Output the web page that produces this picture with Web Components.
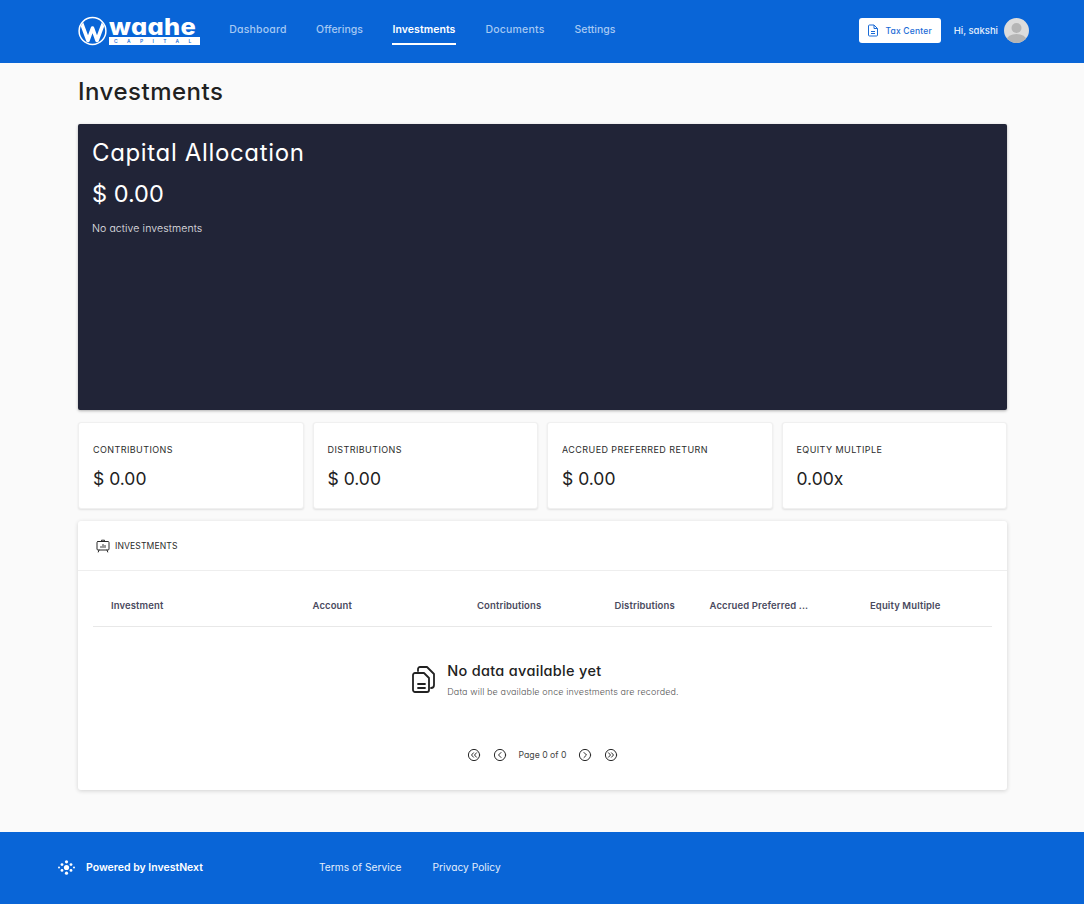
<!DOCTYPE html>
<html>
<head>
<meta charset="utf-8">
<title>Investments</title>
<style>
  html, body { margin: 0; padding: 0; background: #fafafa; }
  body { font-family: Inter, "Open Sans", sans-serif; color: #212121; }
  main { display: block; padding: 0 77px 0 78px; height: 769px; box-sizing: border-box; }
  .stats { display: grid; grid-template-columns: repeat(4, 1fr); gap: 9px; margin-top: 12px; }
</style>
</head>
<body>
<app-header></app-header>
<main>
  <page-title>Investments</page-title>
  <allocation-card></allocation-card>
  <div class="stats">
    <stat-card label="CONTRIBUTIONS" value="$ 0.00"></stat-card>
    <stat-card label="DISTRIBUTIONS" value="$ 0.00"></stat-card>
    <stat-card label="ACCRUED PREFERRED RETURN" value="$ 0.00"></stat-card>
    <stat-card label="EQUITY MULTIPLE" value="0.00x"></stat-card>
  </div>
  <investments-table></investments-table>
</main>
<app-footer></app-footer>

<script>
// single-storey "a" in Inter, closest thing to the reference's typeface
const ROUND_A = `* { font-feature-settings: "cv11" !important; }`;

class AppHeader extends HTMLElement {
  constructor() {
    super();
    this.shadowDOM = this.attachShadow({mode: "open"});
    this.shadowDOM.innerHTML = `
      <style>
        ${ROUND_A}
        :host { display: flex; align-items: center; height: 63px; background: #0965d7; padding: 0 55px 0 78px; box-sizing: border-box; color: #fff; }
        .logo { display: flex; align-items: center; gap: 2px; width: 122px; height: 30px; margin-top: -2px; }
        .word { display: flex; flex-direction: column; width: 91px; }
        .waahe { font: 800 22.5px/17px Inter, sans-serif; height: 17px; margin-top: 1px; letter-spacing: .3px; transform: scaleX(1.13); transform-origin: left center; white-space: nowrap; }
        .capital { background: #fff; color: #0965d7; font: 500 5px/8px Inter, sans-serif; letter-spacing: 9.4px; height: 8px; padding-left: 5px; margin-top: 2px; white-space: nowrap; }
        nav { display: flex; margin-left: 29px; gap: 29px; height: 63px; }
        nav a { display: flex; align-items: center; justify-content: center; white-space: nowrap; font: 500 10.5px Inter, sans-serif; letter-spacing: .2px; color: #a5c8f3; height: 59px; }
        nav a.on { color: #fff; font-weight: 600; letter-spacing: .05px; border-bottom: 2px solid #fff; padding-top: 15px; height: 28px; }
        .right { margin-left: auto; display: flex; align-items: center; padding-bottom: 2px; }
        .tax { display: flex; align-items: center; justify-content: center; gap: 4px; width: 82px; height: 25px; margin-left: 1px; background: #fff; border-radius: 3px; color: #1a6bd6; font: 500 8.5px Inter, sans-serif; letter-spacing: .2px; }
        .hi { font: 500 9.5px Inter, sans-serif; margin-left: 13px; margin-right: 6px; color: #e3eefc; }
      </style>
      <div class="logo">
        <svg width="29" height="30" viewBox="0 0 29 30">
          <defs><clipPath id="ring"><circle cx="14.5" cy="15" r="12.6"/></clipPath></defs>
          <circle cx="14.5" cy="15" r="13.4" fill="none" stroke="#fff" stroke-width="1.5"/>
          <path clip-path="url(#ring)" d="M3.5 7 L10 24.5 L14.5 12 L19 24.5 L25.5 7" fill="none" stroke="#fff" stroke-width="3.6" stroke-linejoin="round"/>
        </svg>
        <div class="word"><div class="waahe">waahe</div><div class="capital">CAPITAL</div></div>
      </div>
      <nav>
        <a style="width:58px">Dashboard</a><a style="width:47px;letter-spacing:0">Offerings</a><a class="on" style="width:64px">Investments</a><a style="width:60px">Documents</a><a style="width:42px;letter-spacing:0">Settings</a>
      </nav>
      <div class="right">
        <div class="tax">
          <svg width="12" height="13" viewBox="0 0 12 13" fill="none" stroke="#1a6bd6" stroke-width="1">
            <path d="M1.5 2a1 1 0 0 1 1-1h4.5l3.5 3.5V11a1 1 0 0 1-1 1h-7a1 1 0 0 1-1-1z"/>
            <path d="M7 1v3.5h3.5M4 7.5h4M4 9.5h4"/>
          </svg>
          <span style="margin-left:2px">Tax Center</span>
        </div>
        <div class="hi">Hi, sakshi</div>
        <svg width="25" height="25" viewBox="0 0 25 25">
          <defs><clipPath id="av"><circle cx="12.5" cy="12.5" r="12.5"/></clipPath></defs>
          <g clip-path="url(#av)">
            <rect width="25" height="25" fill="#dcdcdc"/>
            <circle cx="12.5" cy="10" r="5" fill="#b5b5b5"/>
            <ellipse cx="12.5" cy="22" rx="10" ry="6" fill="#b5b5b5"/>
          </g>
        </svg>
      </div>`;
  }
}
customElements.define("app-header", AppHeader);

class PageTitle extends HTMLElement {
  constructor() {
    super();
    this.attachShadow({mode: "open"}).innerHTML = `
      <style>
        ${ROUND_A}
        :host { display: block; height: 61px; padding-top: 14px; box-sizing: border-box; font: 500 24px/30px Inter, sans-serif; color: #212121; letter-spacing: .5px; font-feature-settings: "cv11"; }
      </style>
      <slot></slot>`;
  }
}
customElements.define("page-title", PageTitle);

class AllocationCard extends HTMLElement {
  constructor() {
    super();
    this.attachShadow({mode: "open"}).innerHTML = `
      <style>
        ${ROUND_A}
        :host { display: block; height: 286px; background: #212437; border-radius: 2px; box-shadow: 0 1px 3px rgba(0,0,0,.3); padding: 13px 14px; box-sizing: border-box; color: #fff; }
        h2 { margin: 0; font: 400 24px/32px Inter, sans-serif; letter-spacing: .65px; }
        .val { font: 400 23.5px/32px Inter, sans-serif; margin-top: 9px; }
        p { margin: 11px 0 0; font: 300 10.5px/16px Inter, sans-serif; letter-spacing: .1px; color: #e6e6ea; }
      </style>
      <h2>Capital Allocation</h2>
      <div class="val">$ 0.00</div>
      <p>No active investments</p>`;
  }
}
customElements.define("allocation-card", AllocationCard);

class StatCard extends HTMLElement {
  connectedCallback() {
    if (this.shadowRoot) return;
    this.attachShadow({mode: "open"}).innerHTML = `
      <style>
        :host { display: block; height: 87px; background: #fff; border-radius: 3px; border: 1px solid #f0f0f0; box-shadow: 0 1px 2px rgba(0,0,0,.1); padding: 21px 14px 0; box-sizing: border-box; }
        .l { font: 400 9px/12px Inter, sans-serif; letter-spacing: .42px; color: #2b2b2b; white-space: nowrap; }
        .v { font: 400 17.5px/24px Inter, sans-serif; color: #212121; margin-top: 11px; }
      </style>
      <div class="l">${this.getAttribute("label")}</div>
      <div class="v">${this.getAttribute("value")}</div>`;
  }
}
customElements.define("stat-card", StatCard);

class InvestmentsTable extends HTMLElement {
  constructor() {
    super();
    const circle = inner => `<svg width="14" height="14" viewBox="0 0 14 14" fill="none" stroke="#2a2a2a" stroke-width="1" stroke-linecap="round" stroke-linejoin="round"><circle cx="7" cy="7" r="5.6"/>${inner}</svg>`;
    this.attachShadow({mode: "open"}).innerHTML = `
      <style>
        ${ROUND_A}
        :host { display: block; height: 269px; margin-top: 12px; background: #fff; border-radius: 3px; box-shadow: 0 1px 4px rgba(0,0,0,.16); box-sizing: border-box; }
        .head { display: flex; align-items: center; gap: 5px; height: 50px; padding: 0 18px; box-sizing: border-box; border-bottom: 1px solid #eeeeee; font: 400 8.6px Inter, sans-serif; letter-spacing: .1px; color: #2b2b2b; }
        .cols { display: grid; grid-template-columns: 201.5px 164.5px 137.5px 95px 160.5px 1fr; margin: 0 15px; padding: 13px 0 0 18px; height: 56px; box-sizing: border-box; align-items: center; border-bottom: 1px solid #e8e8e8; font: 600 9.5px Inter, sans-serif; color: #4a4a5e; letter-spacing: .12px; }
        .empty { display: flex; justify-content: center; align-items: center; gap: 12px; margin-top: 35px; padding-left: 4px; }
        .empty svg { margin-left: 1px; margin-right: -1px; }
        .empty h3 { margin: 0; font: 500 14.5px/18px Inter, sans-serif; color: #212121; letter-spacing: .3px; }
        .empty p { margin: 6px 0 0; font: 300 9px/12px Inter, sans-serif; color: #555; letter-spacing: .12px; }
        .pager { display: flex; justify-content: center; align-items: center; margin-top: 50px; font: 400 8.7px Inter, sans-serif; color: #444; }
        .pager span { margin: 0 12px; }
        .pager svg + svg { margin-left: 12px; }
      </style>
      <div class="head">
        <svg width="14" height="14" viewBox="0 0 14 14" fill="none" stroke="#2a2a2a" stroke-width="1" stroke-linecap="round" stroke-linejoin="round">
          <rect x="1" y="2.5" width="12" height="8.5" rx="1"/>
          <path d="M5.5 2.5V1.2h3v1.3M3 11l-.7 2M11 11l.7 2M5 8.5V7.5M7 8.5V5.5M9 8.5V6.5"/>
        </svg>
        INVESTMENTS
      </div>
      <div class="cols">
        <div>Investment</div><div>Account</div><div>Contributions</div><div>Distributions</div><div>Accrued Preferred ...</div><div>Equity Multiple</div>
      </div>
      <div class="empty">
        <svg width="25" height="28" viewBox="0 0 25 28" fill="none" stroke="#222" stroke-width="1.8" stroke-linecap="round" stroke-linejoin="round">
          <path d="M2 10a2 2 0 0 1 2-2h9l5 5v12a2 2 0 0 1-2 2H4a2 2 0 0 1-2-2z" transform="translate(0 -1)"/>
          <path d="M7 5V3a2 2 0 0 1 2-2h7l7 7v11a3 3 0 0 1-3 3"/>
          <path d="M7 18h7M7 22h7"/>
        </svg>
        <div><h3>No data available yet</h3><p>Data will be available once investments are recorded.</p></div>
      </div>
      <div class="pager">
        ${circle('<path d="M6.5 4.8 4.5 7l2 2.2M9.5 4.8 7.5 7l2 2.2"/>')}
        ${circle('<path d="M8 4.5 5.5 7 8 9.5"/>')}
        <span>Page 0 of 0</span>
        ${circle('<path d="M6 4.5 8.5 7 6 9.5"/>')}
        ${circle('<path d="M4.5 4.8 6.5 7l-2 2.2M7.5 4.8 9.5 7l-2 2.2"/>')}
      </div>`;
  }
}
customElements.define("investments-table", InvestmentsTable);

class AppFooter extends HTMLElement {
  constructor() {
    super();
    this.attachShadow({mode: "open"}).innerHTML = `
      <style>
        ${ROUND_A}
        :host { display: flex; align-items: center; height: 72px; background: #0965d7; padding: 0 0 2px 58px; box-sizing: border-box; color: #fff; }
        .p { font: 600 10.5px Inter, sans-serif; margin-left: 11px; width: 233px; }
        a { font: 400 10.2px Inter, sans-serif; letter-spacing: .03px; color: #e3eefc; margin-right: 31px; }
      </style>
      <svg width="17" height="15" viewBox="0 0 17 15" fill="#fff">
        <circle cx="8.5" cy="7.5" r="2.6"/><circle cx="8.5" cy="1.8" r="1.6"/><circle cx="8.5" cy="13.2" r="1.6"/>
        <circle cx="4" cy="4.6" r="1.4"/><circle cx="4" cy="10.4" r="1.4"/><circle cx="13" cy="4.6" r="1.4"/><circle cx="13" cy="10.4" r="1.4"/>
        <circle cx="1" cy="7.5" r="1"/><circle cx="16" cy="7.5" r="1"/>
      </svg>
      <div class="p">Powered by InvestNext</div>
      <a>Terms of Service</a><a>Privacy Policy</a>`;
  }
}
customElements.define("app-footer", AppFooter);
</script>
</body>
</html>
